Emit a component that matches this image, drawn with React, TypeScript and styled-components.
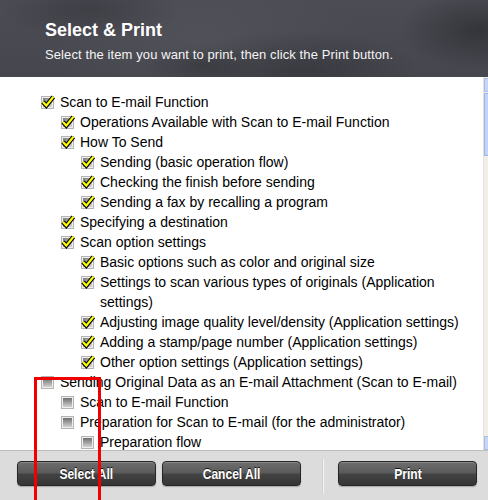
import React from 'react';
import styled, { createGlobalStyle } from 'styled-components';

const GlobalStyle = createGlobalStyle`
  html, body {
    margin: 0;
    padding: 0;
    width: 488px;
    height: 500px;
    overflow: hidden;
    background: #ffffff;
  }
  * { box-sizing: border-box; }
`;

const Page = styled.div`
  position: relative;
  width: 488px;
  height: 500px;
  display: flex;
  flex-direction: column;
  font-family: "Liberation Sans", Arial, sans-serif;
  overflow: hidden;
`;

const Header = styled.div`
  height: 77px;
  flex: none;
  padding: 19px 0 0 45px;
  color: #ffffff;
  background:
    radial-gradient(ellipse 120px 40px at 300px 70px, rgba(30, 30, 36, 0.35), transparent),
    radial-gradient(ellipse 90px 30px at 90px 10px, rgba(30, 30, 36, 0.3), transparent),
    radial-gradient(ellipse 60px 20px at 200px 66px, rgba(28, 28, 34, 0.3), transparent),
    radial-gradient(ellipse 80px 40px at 480px 30px, rgba(25, 25, 30, 0.45), transparent),
    radial-gradient(ellipse 160px 60px at 200px 40px, rgba(95, 95, 102, 0.35), transparent),
    linear-gradient(180deg, #4c4c54 0%, #46464e 100%);
`;

const Title = styled.div`
  font-size: 18px;
  font-weight: bold;
  line-height: 22px;
`;

const Subtitle = styled.div`
  font-size: 13px;
  line-height: 16px;
  margin-top: 6px;
  letter-spacing: 0.1px;
  color: #f4f4f4;
`;

const Content = styled.div`
  height: 374px;
  flex: none;
  display: flex;
  background: #ffffff;
  border-bottom: 1px solid #bdbdbd;
  overflow: hidden;
`;

const List = styled.div`
  flex: 1;
  padding: 15px 15px 0 0;
  font-size: 14px;
  line-height: 20px;
  color: #000000;
`;

const Row = styled.div<{ $level: number }>`
  display: flex;
  align-items: flex-start;
  gap: 6px;
  padding-left: ${(p) => 41 + p.$level * 20}px;
`;

const Label = styled.span`
  flex: 1;
  min-width: 0;
`;

const BoxIcon = styled.svg`
  flex: none;
  margin-top: 4px;
  overflow: visible;
`;

const ScrollTrack = styled.div`
  width: 5px;
  flex: none;
  display: flex;
  flex-direction: column;
  background: #f1efe8;
  border-left: 1px solid #e4e2da;
`;

const ScrollButton = styled.div`
  height: 14px;
  margin-top: 1px;
  background: #c6d6f6;
  border: 1px solid #a9bde8;
  border-right: none;
`;

const ScrollThumb = styled.div`
  height: 63px;
  margin-top: 1px;
  background: #c4d4f8;
  border: 1px solid #9fb4e6;
  border-right: none;
`;

const ScrollSpacer = styled.div`
  flex: 1;
`;

const Footer = styled.div`
  flex: 1;
  background: #dcdcdc;
  display: flex;
  align-items: flex-start;
  padding: 10px 0 0 17px;
`;

const Button = styled.button`
  width: 139px;
  height: 25px;
  margin-right: 6px;
  border: 1px solid #262626;
  border-radius: 4px;
  padding: 0;
  color: #ffffff;
  font-family: "Liberation Sans", Arial, sans-serif;
  font-size: 14px;
  font-weight: bold;
  text-shadow: 0 -1px 0 #111111;
  background: linear-gradient(180deg, #6e6e6e 0%, #5a5a5a 48%, #434343 52%, #353535 100%);
  box-shadow: inset 0 1px 0 rgba(255, 255, 255, 0.18), 0 1px 1px rgba(0, 0, 0, 0.25);
  cursor: pointer;
`;

// the skin uses a condensed face; squeeze the real text instead
const ButtonText = styled.span`
  display: inline-block;
  transform: scaleX(0.86);
`;

const Divider = styled.div`
  width: 1px;
  height: 35px;
  margin: -2px 14px 0 16px;
  background: #f6f6f6;
  box-shadow: -1px 0 0 #cfcfcf;
`;

const Marker = styled.div`
  position: absolute;
  left: 34px;
  top: 377px;
  width: 67px;
  height: 140px;
  border: 3px solid #f00000;
  pointer-events: none;
`;

type Item = { level: number; checked: boolean; label: string };

const items: Item[] = [
  { level: 0, checked: true, label: 'Scan to E-mail Function' },
  { level: 1, checked: true, label: 'Operations Available with Scan to E-mail Function' },
  { level: 1, checked: true, label: 'How To Send' },
  { level: 2, checked: true, label: 'Sending (basic operation flow)' },
  { level: 2, checked: true, label: 'Checking the finish before sending' },
  { level: 2, checked: true, label: 'Sending a fax by recalling a program' },
  { level: 1, checked: true, label: 'Specifying a destination' },
  { level: 1, checked: true, label: 'Scan option settings' },
  { level: 2, checked: true, label: 'Basic options such as color and original size' },
  { level: 2, checked: true, label: 'Settings to scan various types of originals (Application settings)' },
  { level: 2, checked: true, label: 'Adjusting image quality level/density (Application settings)' },
  { level: 2, checked: true, label: 'Adding a stamp/page number (Application settings)' },
  { level: 2, checked: true, label: 'Other option settings (Application settings)' },
  { level: 0, checked: false, label: 'Sending Original Data as an E-mail Attachment (Scan to E-mail)' },
  { level: 1, checked: false, label: 'Scan to E-mail Function' },
  { level: 1, checked: false, label: 'Preparation for Scan to E-mail (for the administrator)' },
  { level: 2, checked: false, label: 'Preparation flow' },
];

// checkbox drawn as in the old kiosk skin: grey bevelled box, yellow tick
const CheckBox = ({ checked }: { checked: boolean }) => (
  <BoxIcon width="13" height="13" viewBox="0 0 13 13">
    <defs>
      <linearGradient id="cbOn" x1="0" y1="0" x2="1" y2="1">
        <stop offset="0" stopColor="#7a7a7a" />
        <stop offset="1" stopColor="#dadada" />
      </linearGradient>
      <linearGradient id="cbOff" x1="0" y1="0" x2="0" y2="1">
        <stop offset="0" stopColor="#6f6f6f" />
        <stop offset="1" stopColor="#d2d2d2" />
      </linearGradient>
    </defs>
    <rect x="0.5" y="0.5" width="12" height="12" fill="#eeeeee" stroke="#b4b4b4" />
    <rect x="2" y="2" width="9" height="9" fill={checked ? 'url(#cbOn)' : 'url(#cbOff)'} />
    {checked && (
      <>
        <path d="M2 6 L5.3 9.6 L12.4 0.8" fill="none" stroke="#000000" strokeWidth="4.4" strokeLinejoin="miter" />
        <path d="M2 6 L5.3 9.6 L12.4 0.8" fill="none" stroke="#ffff00" strokeWidth="2.2" strokeLinejoin="miter" />
      </>
    )}
  </BoxIcon>
);

export default function App() {
  return (
    <Page>
      <GlobalStyle />
      <Header>
        <Title>Select &amp; Print</Title>
        <Subtitle>Select the item you want to print, then click the Print button.</Subtitle>
      </Header>
      <Content>
        <List>
          {items.map((it, i) => (
            <Row key={i} $level={it.level}>
              <CheckBox checked={it.checked} />
              <Label>{it.label}</Label>
            </Row>
          ))}
        </List>
        <ScrollTrack>
          <ScrollButton />
          <ScrollThumb />
          <ScrollSpacer />
          <ScrollButton />
        </ScrollTrack>
      </Content>
      <Footer>
        <Button><ButtonText>Select All</ButtonText></Button>
        <Button><ButtonText>Cancel All</ButtonText></Button>
        <Divider />
        <Button><ButtonText>Print</ButtonText></Button>
      </Footer>
      <Marker />
    </Page>
  );
}
